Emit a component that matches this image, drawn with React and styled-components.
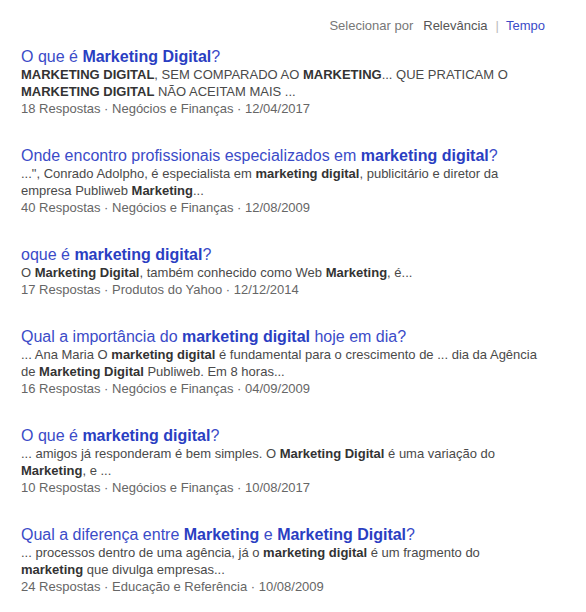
import React from "react";
import styled, { createGlobalStyle } from "styled-components";

const GlobalStyle = createGlobalStyle`
  body {
    margin: 0;
    background: #fff;
    font-family: "Liberation Sans", Arial, sans-serif;
  }
`;

const Page = styled.div`
  padding: 17px 0 0 21px;
  width: 524px;
`;

const SortBar = styled.div`
  display: flex;
  justify-content: flex-end;
  align-items: center;
  font-size: 13px;
  line-height: 17px;
  margin-bottom: 14px;
`;

const SortLabel = styled.span`
  color: #777;
  margin-right: 10px;
`;

const SortOption = styled.span`
  color: ${(p) => (p.active ? "#3b4bc8" : "#555")};
`;

const Divider = styled.span`
  color: #bbb;
  margin: 0 7px 0 8px;
`;

const Result = styled.div`
  margin-bottom: 30px;
`;

const Title = styled.a`
  display: block;
  font-size: 16px;
  line-height: 18px;
  color: #3b4bc8;
  text-decoration: none;

  b {
    color: #2a3ec2;
  }
`;

const Snippet = styled.div`
  font-size: 13px;
  line-height: 17px;
  color: #4a4a4a;

  b {
    color: #333;
  }
`;

const Meta = styled.div`
  font-size: 13px;
  line-height: 17px;
  color: #666;
`;

const RESULTS = [
  {
    title: <>O que é <b>Marketing Digital</b>?</>,
    snippet: (
      <>
        <b>MARKETING DIGITAL</b>, SEM COMPARADO AO <b>MARKETING</b>... QUE PRATICAM O{" "}
        <b>MARKETING DIGITAL</b> NÃO ACEITAM MAIS ...
      </>
    ),
    meta: "18 Respostas · Negócios e Finanças · 12/04/2017",
  },
  {
    title: <>Onde encontro profissionais especializados em <b>marketing digital</b>?</>,
    snippet: (
      <>
        ...", Conrado Adolpho, é especialista em <b>marketing digital</b>, publicitário e diretor da
        empresa Publiweb <b>Marketing</b>...
      </>
    ),
    meta: "40 Respostas · Negócios e Finanças · 12/08/2009",
  },
  {
    title: <>oque é <b>marketing digital</b>?</>,
    snippet: (
      <>
        O <b>Marketing Digital</b>, também conhecido como Web <b>Marketing</b>, é...
      </>
    ),
    meta: "17 Respostas · Produtos do Yahoo · 12/12/2014",
  },
  {
    title: <>Qual a importância do <b>marketing digital</b> hoje em dia?</>,
    snippet: (
      <>
        ... Ana Maria O <b>marketing digital</b> é fundamental para o crescimento de ... dia da Agência
        de <b>Marketing Digital</b> Publiweb. Em 8 horas...
      </>
    ),
    meta: "16 Respostas · Negócios e Finanças · 04/09/2009",
  },
  {
    title: <>O que é <b>marketing digital</b>?</>,
    snippet: (
      <>
        ... amigos já responderam é bem simples. O <b>Marketing Digital</b> é uma variação do{" "}
        <b>Marketing</b>, e ...
      </>
    ),
    meta: "10 Respostas · Negócios e Finanças · 10/08/2017",
  },
  {
    title: <>Qual a diferença entre <b>Marketing</b> e <b>Marketing Digital</b>?</>,
    snippet: (
      <>
        ... processos dentro de uma agência, já o <b>marketing digital</b> é um fragmento do{" "}
        <b>marketing</b> que divulga empresas...
      </>
    ),
    meta: "24 Respostas · Educação e Referência · 10/08/2009",
  },
];

export default function App() {
  return (
    <>
      <GlobalStyle />
      <Page>
        <SortBar>
          <SortLabel>Selecionar por</SortLabel>
          <SortOption>Relevância</SortOption>
          <Divider>|</Divider>
          <SortOption active>Tempo</SortOption>
        </SortBar>
        {RESULTS.map((r, i) => (
          <Result key={i}>
            <Title href="#">{r.title}</Title>
            <Snippet>{r.snippet}</Snippet>
            <Meta>{r.meta}</Meta>
          </Result>
        ))}
      </Page>
    </>
  );
}
